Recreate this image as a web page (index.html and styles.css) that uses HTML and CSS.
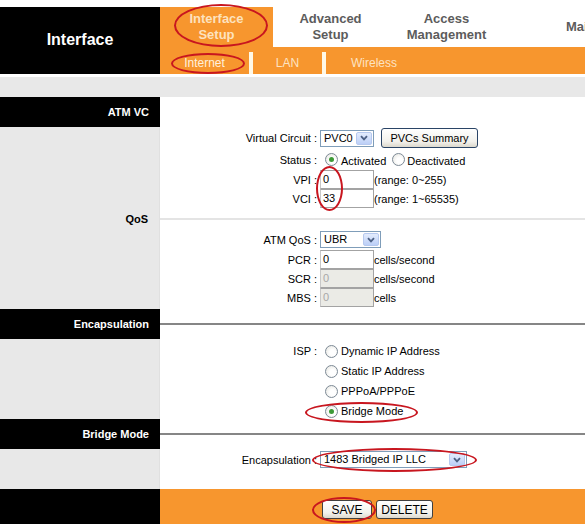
FILE: index.html
```html
<!DOCTYPE html>
<html>
<head>
<meta charset="utf-8">
<link rel="stylesheet" href="styles.css">
</head>
<body>
<div class="page">
  <div class="topgap"></div>
  <header class="hdr">
    <div class="brand">Interface</div>
    <div class="navwrap">
      <nav class="tabs">
        <div class="tab active">Interface<br>Setup</div>
        <div class="tab t2">Advanced<br>Setup</div>
        <div class="tab t3">Access<br>Management</div>
        <div class="tab t4">Maintenance</div>
      </nav>
      <nav class="sub">
        <div class="subitem s1">Internet</div>
        <div class="sep"></div>
        <div class="subitem s2">LAN</div>
        <div class="sep"></div>
        <div class="subitem s3">Wireless</div>
      </nav>
    </div>
  </header>
  <div class="whitegap"></div>
  <div class="band"></div>

  <main class="grid">
    <div class="side head">ATM VC</div>
    <div class="main"></div>

    <div class="side"></div>
    <div class="main">
      <div class="row r-vc">
        <div class="lbl">Virtual Circuit :</div>
        <div class="sel w-pvc"><span class="val">PVC0</span><span class="arr"><svg width="8" height="6" viewBox="0 0 8 6"><path d="M1 1.2 L4 4.4 L7 1.2" fill="none" stroke="#4d6185" stroke-width="1.8"/></svg></span></div>
        <div class="btn btn-pvcs">PVCs Summary</div>
      </div>
      <div class="row r-status">
        <div class="lbl">Status :</div>
        <span class="radio on"></span><span class="rtext">Activated</span>
        <span class="radio r2"></span><span class="rtext">Deactivated</span>
      </div>
      <div class="row r-in">
        <div class="lbl">VPI :</div>
        <div class="inp">0</div><span class="after">(range: 0~255)</span>
      </div>
      <div class="row r-in">
        <div class="lbl">VCI :</div>
        <div class="inp">33</div><span class="after">(range: 1~65535)</span>
      </div>
    </div>

    <div class="side qos"><span class="qos-lbl">QoS</span></div>
    <div class="main">
      <div class="thin"></div>
      <div class="row r-atmqos">
        <div class="lbl">ATM QoS :</div>
        <div class="sel w-qos"><span class="val">UBR</span><span class="arr"><svg width="8" height="6" viewBox="0 0 8 6"><path d="M1 1.2 L4 4.4 L7 1.2" fill="none" stroke="#4d6185" stroke-width="1.8"/></svg></span></div>
      </div>
      <div class="row r-in first">
        <div class="lbl">PCR :</div>
        <div class="inp">0</div><span class="after">cells/second</span>
      </div>
      <div class="row r-in">
        <div class="lbl">SCR :</div>
        <div class="inp dis">0</div><span class="after">cells/second</span>
      </div>
      <div class="row r-in">
        <div class="lbl">MBS :</div>
        <div class="inp dis">0</div><span class="after">cells</span>
      </div>
    </div>

    <div class="side head">Encapsulation</div>
    <div class="main rule"><div class="line"></div></div>

    <div class="side"></div>
    <div class="main isp">
      <div class="row r-isp">
        <div class="lbl">ISP :</div>
        <span class="radio"></span><span class="rtext">Dynamic IP Address</span>
      </div>
      <div class="row r-isp">
        <div class="lbl"></div>
        <span class="radio"></span><span class="rtext">Static IP Address</span>
      </div>
      <div class="row r-isp">
        <div class="lbl"></div>
        <span class="radio"></span><span class="rtext">PPPoA/PPPoE</span>
      </div>
      <div class="row r-isp">
        <div class="lbl"></div>
        <span class="radio on"></span><span class="rtext">Bridge Mode</span>
      </div>
    </div>

    <div class="side head">Bridge Mode</div>
    <div class="main rule"><div class="line"></div></div>

    <div class="side"></div>
    <div class="main enc">
      <div class="row r-enc">
        <div class="lbl">Encapsulation :</div>
        <div class="sel w-enc"><span class="val">1483 Bridged IP LLC</span><span class="arr"><svg width="8" height="6" viewBox="0 0 8 6"><path d="M1 1.2 L4 4.4 L7 1.2" fill="none" stroke="#4d6185" stroke-width="1.8"/></svg></span></div>
      </div>
    </div>

    <div class="side footl"></div>
    <div class="main footr">
      <div class="btn btn-save">SAVE</div>
      <div class="btn btn-del">DELETE</div>
    </div>
  </main>

  <div class="mark m1"></div>
  <div class="mark m2"></div>
  <div class="mark m3"></div>
  <div class="mark m4"></div>
  <div class="mark m5"></div>
  <div class="mark m6"></div>
</div>
</body>
</html>
```
FILE: styles.css
```css
* { box-sizing: border-box; }
html, body { margin: 0; padding: 0; background: #fff; }
body { font-family: "Liberation Sans", Arial, sans-serif; font-size: 11px; color: #000; }

.page { position: relative; width: 585px; height: 524px; overflow: hidden; }

.topgap { height: 7px; }

.hdr { display: flex; height: 67px; }
.brand {
  width: 160px; background: #000; color: #fff;
  font-weight: bold; font-size: 16px;
  display: flex; align-items: center; justify-content: center;
  padding-bottom: 1px;
}
.navwrap { flex: 1; display: flex; flex-direction: column; min-width: 0; }
.tabs { display: flex; height: 40px; white-space: nowrap; }
.tab {
  font-weight: bold; font-size: 13px; line-height: 16px;
  color: #5c5c5c; text-align: center;
  display: flex; align-items: center; justify-content: center;
  flex: none;
}
.tab.active { width: 113px; background: #f7962e; color: #fde2be; }
.tab.t2 { width: 115px; }
.tab.t3 { width: 117px; }
.tab.t4 { justify-content: flex-start; padding-left: 61px; width: 200px; }

.sub { display: flex; height: 27px; background: #f7962e; }
.subitem {
  color: #fde3c2; font-size: 12px; padding-top: 9px;
  text-align: center;
}
.s1 { width: 89px; color: #fff0dc; }
.s2 { width: 69px; }
.s3 { padding-left: 25px; }
.sep { width: 4px; margin-top: 5px; background: #fff8e6; }

.whitegap { height: 3px; }
.band { height: 20px; background: #e8e8e8; }

.grid {
  display: grid;
  grid-template-columns: 160px 425px;
  grid-template-rows: 30px 85px 97px 30px 80px 30px 40px 35px;
}
.side { background: #e8e8e8; border-right: 1px solid #e0e0e0; }
.side.head {
  background: #000; color: #fff; font-weight: bold; font-size: 11px;
  display: flex; align-items: center; justify-content: flex-end;
  padding-right: 11px; border-right: none;
}
.side.qos { display: flex; justify-content: flex-end; padding-right: 11px; }
.qos-lbl { font-weight: bold; line-height: 14px; }
.side.footl { background: #000; border-right: none; }

.main { background: #fff; }
.row { display: flex; align-items: center; }
.lbl { width: 160px; flex: none; text-align: right; padding-right: 3px; white-space: nowrap; }

.r-vc { height: 22px; }
.r-status { height: 21px; }
.r-in { height: 19px; }
.r-atmqos { height: 19px; margin-top: 10px; }
.r-in.first { margin-top: 1px; }
.isp { padding-top: 2px; }
.r-isp { height: 20px; }
.enc { padding-top: 2px; }
.r-enc { height: 17px; }

.thin { height: 2px; margin-top: 6px; background: #e4e4e4; }
.rule { display: flex; align-items: center; }
.line { height: 2px; width: 100%; background: #868686; }

.sel {
  display: flex; height: 17px; border: 1px solid #7f9db9; background: #fff;
}
.sel .val { flex: 1; padding-left: 3px; line-height: 15px; white-space: nowrap; }
.sel .arr {
  width: 16px; margin: 1px; border: 1px solid #b6c9ef; border-radius: 2px;
  background: linear-gradient(#e3ecfd, #bccff7);
  display: flex; align-items: center; justify-content: center;
}
.w-pvc { width: 54px; }
.w-qos { width: 61px; }
.w-enc { width: 147px; }

.btn {
  height: 20px; border: 1px solid #2a4466; border-radius: 3px;
  background: linear-gradient(#ffffff, #f2f1ec 70%, #dcd8cc);
  display: flex; align-items: center; justify-content: center;
  font-size: 11px;
}
.btn-pvcs { width: 97px; margin-left: 7px; }

.radio {
  width: 13px; height: 13px; border-radius: 50%; flex: none;
  border: 1px solid #7d8a96;
  background: radial-gradient(circle at 60% 60%, #ffffff 30%, #e2e2dc 100%);
  margin-left: 5px; margin-right: 3px; position: relative;
}
.radio.on::after {
  content: ""; position: absolute; left: 3px; top: 3px;
  width: 5px; height: 5px; border-radius: 50%;
  background: #3d9a37;
}
.radio.r2 { margin-left: 6px; margin-right: 2px; }
.rtext { white-space: nowrap; }
.r-status .rtext { padding-top: 2px; }

.inp {
  width: 54px; height: 19px; border: 1px solid #a3a3a3; border-left-color: #c8c8c8;
  background: #fff; padding-left: 2px; line-height: 17px;
}
.inp.dis { background: #ebebe6; color: #a8a8a8; }
.after { white-space: nowrap; }

.footr { background: #f7962e; display: flex; align-items: flex-start; padding-left: 162px; padding-top: 11px; }
.btn-save { width: 50px; height: 19px; font-size: 12px; border-color: #404040; }
.btn-del { width: 57px; height: 19px; font-size: 12px; margin-left: 4px; border-color: #404040; }

.mark { position: absolute; border: 2px solid #c8161f; border-radius: 50%; }
.m1 { left: 174px; top: 4px; width: 94px; height: 43px; }
.m2 { left: 171px; top: 53px; width: 74px; height: 21px; }
.m3 { left: 316px; top: 166px; width: 27px; height: 45px; }
.m4 { left: 305px; top: 402px; width: 113px; height: 21px; }
.m5 { left: 312px; top: 448px; width: 165px; height: 24px; }
.m6 { left: 312px; top: 497px; width: 64px; height: 26px; }
```
